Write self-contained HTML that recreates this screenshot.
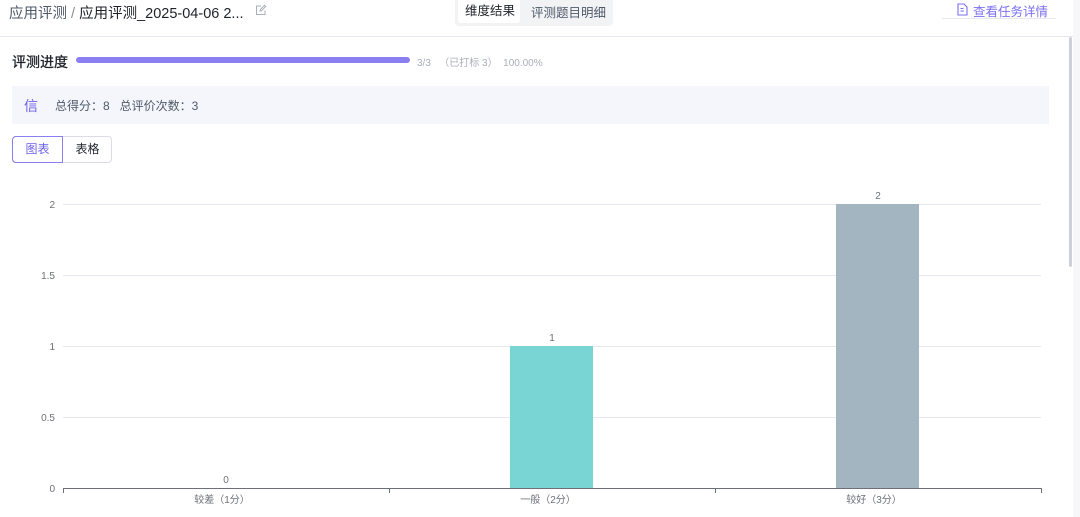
<!DOCTYPE html>
<html><head><meta charset="utf-8"><style>
*{margin:0;padding:0;box-sizing:border-box}
body{width:1080px;height:517px;overflow:hidden;background:#fff;font-family:"Liberation Sans","Noto Sans CJK SC",sans-serif;position:relative;color:#1d2129}
.a{position:absolute;white-space:nowrap}
</style></head><body>
<div class="a" style="left:9px;top:2px;font-size:14.5px;color:#4e5969">应用评测 <span style="color:#86909c">/</span> <span style="color:#1d2129">应用评测_2025-04-06 2...</span></div>
<svg class="a" style="left:255px;top:4px" width="12" height="12" viewBox="0 0 12 12" fill="none" stroke="#a9aeb8" stroke-width="1"><path d="M10 6.5V10.5H1.5V2H6"/><path d="M5 7L5.3 5.5L9.5 1.3L10.7 2.5L6.5 6.7Z"/></svg>
<div class="a" style="left:455px;top:-4px;width:158px;height:30px;background:#f2f3f5;border-radius:4px"></div>
<div class="a" style="left:458px;top:-4px;width:62px;height:27px;background:#fff;border-radius:3px;font-size:12.5px;line-height:27px;padding-left:7px;padding-top:2px">维度结果</div>
<div class="a" style="left:531px;top:2px;font-size:12.5px;color:#4e5969">评测题目明细</div>
<svg class="a" style="left:957px;top:3px" width="11" height="13" viewBox="0 0 11 13" fill="none" stroke="#7b6ff0" stroke-width="1.1"><path d="M1 1H7L10 4V12H1Z"/><path d="M3.5 5.5H6.5M3.5 8H7"/></svg>
<div class="a" style="left:973px;top:1px;font-size:12.5px;color:#7b6ff0">查看任务详情</div>
<div class="a" style="left:942px;top:18px;width:114px;height:1px;background:#e8e9ef"></div>
<div class="a" style="left:0;top:36px;width:1073px;height:1px;background:#e5e6ef"></div>
<div class="a" style="left:1073px;top:0;width:7px;height:517px;background:#f7f7f9"></div>
<div class="a" style="left:1069px;top:37px;width:3px;height:230px;background:#cfd0da;border-radius:2px"></div>
<div class="a" style="left:12px;top:52px;font-size:14px;color:#1d2129;-webkit-text-stroke:0.3px #1d2129">评测进度</div>
<div class="a" style="left:76px;top:57px;width:334px;height:6px;background:#8b7df2;border-radius:3px"></div>
<div class="a" style="left:417px;top:54px;font-size:10px;color:#a9aeb8">3/3 &nbsp;&nbsp;（已打标 3） &nbsp;100.00%</div>
<div class="a" style="left:12px;top:86px;width:1037px;height:38px;background:#f5f6fb"></div>
<div class="a" style="left:24px;top:96px;font-size:14px;color:#6a5fe8">信</div>
<div class="a" style="left:55px;top:97px;font-size:12px;color:#4e5969">总得分：8 &nbsp;&nbsp;总评价次数：3</div>
<div class="a" style="left:12px;top:136px;width:100px;height:27px;border:1px solid #dcdce6;border-radius:4px"></div>
<div class="a" style="left:12px;top:136px;width:51px;height:27px;border:1px solid #8b7df2;border-radius:4px 0 0 4px;font-size:12px;color:#6a5fe8;text-align:center;line-height:25px">图表</div>
<div class="a" style="left:63px;top:136px;width:49px;height:27px;font-size:12px;color:#1d2129;text-align:center;line-height:27px">表格</div>
<svg class="a" style="left:0;top:180px" width="1060" height="337" font-family="Liberation Sans, Noto Sans CJK SC, sans-serif" font-size="10" fill="#6e7079">
<g stroke="#e6e7ef" stroke-width="1"><line x1="63" x2="1041" y1="24.5" y2="24.5"/><line x1="63" x2="1041" y1="95.5" y2="95.5"/><line x1="63" x2="1041" y1="166.5" y2="166.5"/><line x1="63" x2="1041" y1="237.5" y2="237.5"/></g>
<g text-anchor="end"><text x="55" y="28">2</text><text x="55" y="99">1.5</text><text x="55" y="170">1</text><text x="55" y="241">0.5</text><text x="55" y="312">0</text></g>
<rect x="510" y="166" width="83" height="142" fill="#79d5d4"/>
<rect x="836" y="24" width="83" height="284" fill="#a2b5c0"/>
<line x1="63" x2="1041" y1="308.5" y2="308.5" stroke="#6e7079"/>
<g stroke="#6e7079"><line x1="63.5" x2="63.5" y1="308" y2="313"/><line x1="389.5" x2="389.5" y1="308" y2="313"/><line x1="715.5" x2="715.5" y1="308" y2="313"/><line x1="1041.5" x2="1041.5" y1="308" y2="313"/></g>
<g text-anchor="middle"><text x="226" y="303">0</text><text x="552" y="161">1</text><text x="878" y="19">2</text>
<text x="222" y="323">较差（1分）</text><text x="548" y="323">一般（2分）</text><text x="874" y="323">较好（3分）</text></g>
</svg>
</body></html>
